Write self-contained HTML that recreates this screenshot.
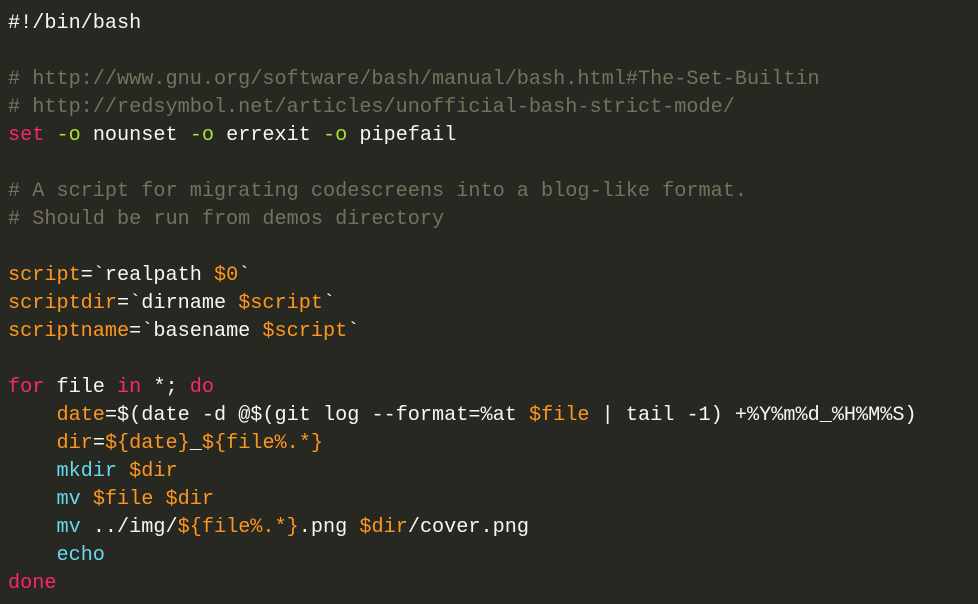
<!DOCTYPE html>
<html><head><meta charset="utf-8"><style>
html,body{margin:0;padding:0;background:#272822;width:978px;height:604px;overflow:hidden}
pre{margin:0;padding:10px 0 0 8px;font-family:"Liberation Mono","DejaVu Sans Mono",monospace;font-size:20.2px;line-height:28px;color:#f8f8f2;white-space:pre}
.c{color:#75715e}.k{color:#f92672}.o{color:#fd971f}.b{color:#66d9ef}.g{color:#a6e22e}
</style></head><body><pre>#!/bin/bash

<span class="c"># http://www.gnu.org/software/bash/manual/bash.html#The-Set-Builtin</span>
<span class="c"># http://redsymbol.net/articles/unofficial-bash-strict-mode/</span>
<span class="k">set</span> <span class="g">-o</span> nounset <span class="g">-o</span> errexit <span class="g">-o</span> pipefail

<span class="c"># A script for migrating codescreens into a blog-like format.</span>
<span class="c"># Should be run from demos directory</span>

<span class="o">script</span>=`realpath <span class="o">$0</span>`
<span class="o">scriptdir</span>=`dirname <span class="o">$script</span>`
<span class="o">scriptname</span>=`basename <span class="o">$script</span>`

<span class="k">for</span> file <span class="k">in</span> *; <span class="k">do</span>
    <span class="o">date</span>=$(date -d @$(git log --format=%at <span class="o">$file</span> | tail -1) +%Y%m%d_%H%M%S)
    <span class="o">dir</span>=<span class="o">${date}</span>_<span class="o">${file%.*}</span>
    <span class="b">mkdir</span> <span class="o">$dir</span>
    <span class="b">mv</span> <span class="o">$file</span> <span class="o">$dir</span>
    <span class="b">mv</span> ../img/<span class="o">${file%.*}</span>.png <span class="o">$dir</span>/cover.png
    <span class="b">echo</span>
<span class="k">done</span></pre></body></html>
